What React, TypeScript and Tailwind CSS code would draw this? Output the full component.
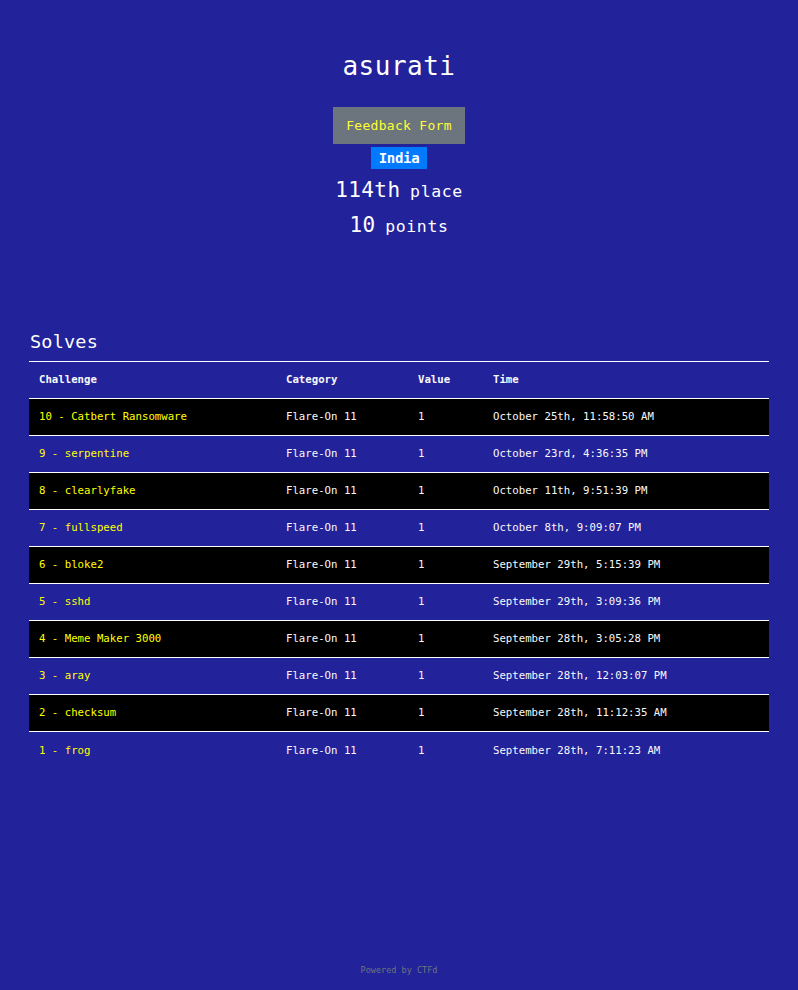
const solves = [
  { name: "10 - Catbert Ransomware", time: "October 25th, 11:58:50 AM" },
  { name: "9 - serpentine", time: "October 23rd, 4:36:35 PM" },
  { name: "8 - clearlyfake", time: "October 11th, 9:51:39 PM" },
  { name: "7 - fullspeed", time: "October 8th, 9:09:07 PM" },
  { name: "6 - bloke2", time: "September 29th, 5:15:39 PM" },
  { name: "5 - sshd", time: "September 29th, 3:09:36 PM" },
  { name: "4 - Meme Maker 3000", time: "September 28th, 3:05:28 PM" },
  { name: "3 - aray", time: "September 28th, 12:03:07 PM" },
  { name: "2 - checksum", time: "September 28th, 11:12:35 AM" },
  { name: "1 - frog", time: "September 28th, 7:11:23 AM" },
];

const mono = "font-['DejaVu_Sans_Mono','Liberation_Mono',monospace]";

export default function App() {
  return (
    <div className={`flex min-h-[990px] flex-col bg-[#22229a] text-[#f8f9fa] ${mono}`}>
      {/* Header */}
      <div className="flex flex-col items-center pt-[48px]">
        <h1 className="text-[26px] leading-[36px] tracking-[0.5px] text-white">asurati</h1>
        <a className="mt-[23px] flex h-[37px] w-[132px] items-center justify-center bg-[#6c757d] text-[13px] tracking-[0.3px] text-[#ffff33]">
          Feedback Form
        </a>
        <span className="mt-[3px] flex h-[22px] w-[56px] items-center justify-center bg-[#007bff] text-[14px] font-bold tracking-[-0.3px] text-white">
          India
        </span>
        <div className="mt-[7px] h-[28px] leading-[28px] text-white">
          <span className="text-[21px] tracking-[0.4px]">114th</span>{" "}
          <span className="text-[16.5px] tracking-[0.6px]">place</span>
        </div>
        <div className="mt-[7px] h-[28px] leading-[28px] text-white">
          <span className="text-[21px] tracking-[0.4px]">10</span>{" "}
          <span className="text-[16.5px] tracking-[0.6px]">points</span>
        </div>
      </div>

      {/* Solves */}
      <div className="mx-[29px] mt-[89px]">
        <h2 className="pl-[1px] text-[18.5px] leading-[28px] tracking-[0.2px] text-white">Solves</h2>
        <table className="mt-[5px] w-full border-collapse text-[10.7px]">
          <thead>
            <tr className="h-[37px] border-t border-white text-left">
              <th className="w-[247px] pt-[1px] pl-[10px] font-bold">Challenge</th>
              <th className="w-[132px] pt-[1px] pl-[10px] font-bold">Category</th>
              <th className="w-[75px] pt-[1px] pl-[10px] font-bold">Value</th>
              <th className="pt-[1px] pl-[10px] font-bold">Time</th>
            </tr>
          </thead>
          <tbody>
            {solves.map((s, i) => (
              <tr key={s.name} className={`h-[37px] border-t border-white ${i % 2 === 0 ? "bg-black" : ""}`}>
                <td className="pt-[1px] pl-[10px] text-[#ffff00]">{s.name}</td>
                <td className="pt-[1px] pl-[10px]">Flare-On 11</td>
                <td className="pt-[1px] pl-[10px]">1</td>
                <td className="pt-[1px] pl-[10px]">{s.time}</td>
              </tr>
            ))}
          </tbody>
        </table>
      </div>

      {/* Footer */}
      <div className="mt-auto pb-[13px] text-center text-[8.5px] text-[#6c757d]">Powered by CTFd</div>
    </div>
  );
}
